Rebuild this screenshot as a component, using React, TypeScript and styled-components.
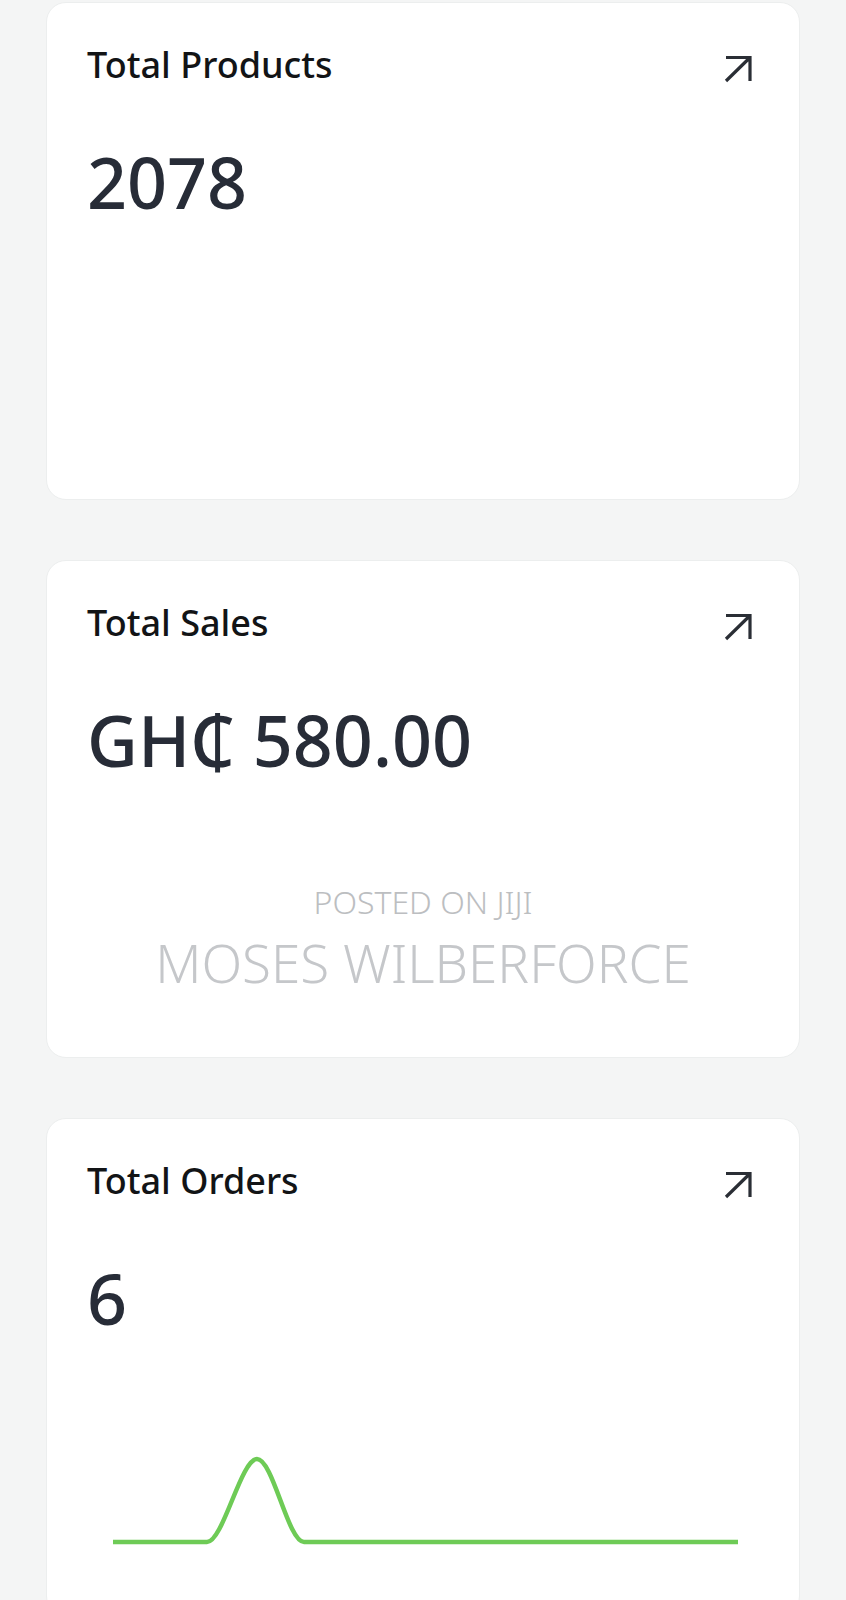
import React from "react";
import styled, { createGlobalStyle } from "styled-components";

const GlobalStyle = createGlobalStyle`
  html, body {
    margin: 0;
    padding: 0;
    background: #f4f5f5;
  }
  body {
    font-family: "Noto Sans", "Open Sans", sans-serif;
  }
  * {
    box-sizing: border-box;
  }
`;

const Page = styled.main`
  position: relative;
  display: flex;
  flex-direction: column;
  gap: 60px;
  padding: 2px 46px 0;
  min-height: 1600px;
  overflow: hidden;
`;

const Card = styled.article`
  display: flex;
  flex-direction: column;
  flex-shrink: 0;
  height: 498px;
  padding: 40px;
  background: #ffffff;
  border: 1px solid #eceeee;
  border-radius: 20px;
`;

const CardHeader = styled.header`
  display: flex;
  align-items: flex-start;
  justify-content: space-between;
`;

const CardTitle = styled.h2`
  margin: 0;
  font-size: 36px;
  font-weight: 500;
  line-height: 1.2;
  color: #121416;
`;

const OpenButton = styled.button`
  display: flex;
  margin: 11px 6px 0 0;
  padding: 0;
  border: none;
  background: transparent;
  color: #2a2e35;
  cursor: pointer;
`;

const CardValue = styled.p`
  margin: 54px 0 0;
  font-size: 70px;
  font-weight: 500;
  line-height: 1.2;
  color: #272c37;
`;

const ChartWrapper = styled.div`
  margin-top: 100px;
  svg {
    display: block;
    width: 100%;
    height: 110px;
  }
`;

const Watermark = styled.div`
  position: absolute;
  top: 883px;
  left: 0;
  right: 0;
  display: flex;
  flex-direction: column;
  align-items: center;
  gap: 10px;
  pointer-events: none;
  text-transform: uppercase;
  line-height: 1.2;
`;

const WatermarkSmall = styled.span`
  font-size: 32px;
  font-weight: 300;
  color: #bcbec1;
`;

const WatermarkLarge = styled.span`
  font-size: 53px;
  font-weight: 300;
  color: #c5c7ca;
`;

const ArrowIcon = () => (
  <svg width="30" height="30" viewBox="0 0 30 30" fill="none">
    <path d="M3 3.5h24V27M3 27 27 3.5" stroke="currentColor" strokeWidth="3.2" />
  </svg>
);

const OrdersChart = () => (
  <ChartWrapper>
    <svg viewBox="0 0 672 110" fill="none">
      <path
        d="M26 102 L120 102 C136 102 154 19 170 19 C186 19 201 102 217 102 L651 102"
        stroke="#6ecb56"
        strokeWidth="4.5"
        strokeLinejoin="round"
      />
    </svg>
  </ChartWrapper>
);

type StatCardProps = {
  title: string;
  value: string;
  children?: React.ReactNode;
};

const StatCard: React.FC<StatCardProps> = ({ title, value, children }) => {
  return (
    <Card>
      <CardHeader>
        <CardTitle>{title}</CardTitle>
        <OpenButton aria-label={`Open ${title}`}>
          <ArrowIcon />
        </OpenButton>
      </CardHeader>
      <CardValue>{value}</CardValue>
      {children}
    </Card>
  );
};

export default function App() {
  return (
    <>
      <GlobalStyle />
      <Page>
        <StatCard title="Total Products" value="2078" />
        <StatCard title="Total Sales" value="GH₵ 580.00" />
        <StatCard title="Total Orders" value="6">
          <OrdersChart />
        </StatCard>
        <Watermark>
          <WatermarkSmall>Posted on Jiji</WatermarkSmall>
          <WatermarkLarge>Moses Wilberforce</WatermarkLarge>
        </Watermark>
      </Page>
    </>
  );
}
